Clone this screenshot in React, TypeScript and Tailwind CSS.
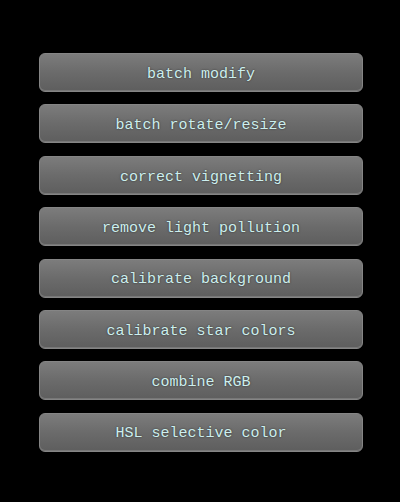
const tools = [
  'batch modify',
  'batch rotate/resize',
  'correct vignetting',
  'remove light pollution',
  'calibrate background',
  'calibrate star colors',
  'combine RGB',
  'HSL selective color',
];

export default function App() {
  return (
    <div className="w-[400px] h-[502px] bg-black pt-[53px] pl-[39px]">
      <div className="flex flex-col gap-[12.4px] w-[324px]">
        {tools.map((label) => (
          <button
            key={label}
            className="h-[39px] w-full pt-[5px] rounded-[6px] border border-[#858585] bg-gradient-to-b from-[#7c7c7c] via-[#6b6b6b] to-[#5e5e5e] shadow-[inset_0_-1px_0_#777] text-[15px] text-[#cdefee] [text-shadow:0_0_2px_rgba(0,0,0,0.6)]"
            style={{ fontFamily: '"Liberation Mono", "Courier New", monospace' }}
          >
            {label}
          </button>
        ))}
      </div>
    </div>
  );
}
